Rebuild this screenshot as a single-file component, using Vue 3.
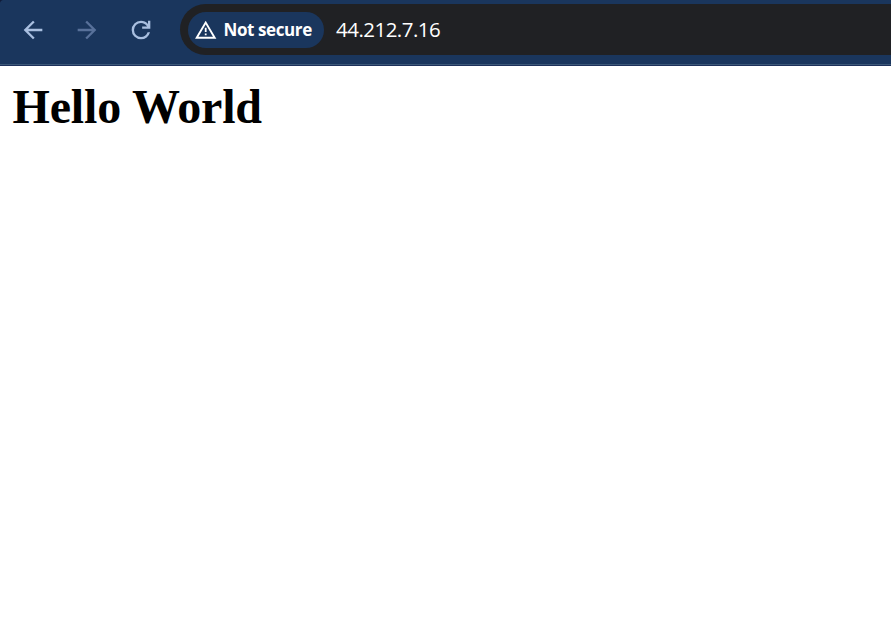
<script setup>
const address = '44.212.7.16'
</script>

<template>
  <div class="window">
    <header class="toolbar">
      <nav class="nav">
        <button class="nav-btn" aria-label="Back">
          <svg viewBox="0 0 24 24"><path d="m7.825 13 5.6 5.6L12 20l-8-8 8-8 1.425 1.4-5.6 5.6H20v2z" /></svg>
        </button>
        <button class="nav-btn muted" aria-label="Forward">
          <svg viewBox="0 0 24 24"><path d="M16.175 13H4v-2h12.175l-5.6-5.6L12 4l8 8-8 8-1.425-1.4z" /></svg>
        </button>
        <button class="nav-btn" aria-label="Reload">
          <svg viewBox="0 0 24 24"><path d="M12 20q-3.35 0-5.675-2.325T4 12t2.325-5.675T12 4q1.725 0 3.3.7125T18 6.75V4h2v7h-7V9h4.2q-.8-1.4-2.1875-2.2T12 6Q9.5 6 7.75 7.75T6 12t1.75 4.25T12 18q1.925 0 3.475-1.1T17.65 14h2.1q-.7 2.65-2.85 4.325T12 20" /></svg>
        </button>
      </nav>
      <div class="omnibox">
        <div class="chip">
          <svg class="warn" viewBox="0 0 22 18">
            <path d="M1.7 16.7L10.7 1.6l9 15.1z" fill="none" stroke="#fff" stroke-width="1.9" />
            <path d="M9.8 6.8h1.8v4.3h-1.8zM9.8 12.5h1.8v1.8h-1.8z" fill="#fff" />
          </svg>
          <span class="label">Not secure</span>
        </div>
        <span class="address">{{ address }}</span>
      </div>
    </header>
    <main class="page">
      <h1>Hello World</h1>
    </main>
  </div>
</template>

<style>
body {
  background: #fff;
}
</style>

<style scoped>
.window {
  height: 628px;
  overflow: hidden;
  background: #fff;
}
.toolbar {
  box-sizing: border-box;
  height: 66px;
  display: flex;
  align-items: flex-start;
  padding: 4px 0 0 19px;
  background:
    linear-gradient(#3c5878, #3c5878) 0 64px / 100% 1px no-repeat,
    linear-gradient(#1d315b, #1d315b) 0 65px / 100% 1px no-repeat,
    radial-gradient(circle at 5px 5px, transparent 5px, #101b38 6px) 0 0 / 3px 5px no-repeat,
    #1a365d;
}
.nav {
  display: flex;
  gap: 27px;
  width: 161px;
  padding-top: 12px;
}
.nav-btn {
  width: 27px;
  height: 27px;
  padding: 0;
  border: 0;
  background: none;
  color: #a9bfe0;
}
.nav-btn.muted {
  color: #58719a;
}
.nav-btn svg {
  display: block;
  width: 28px;
  height: 28px;
  fill: currentColor;
}
.omnibox {
  box-sizing: border-box;
  flex: 1;
  height: 51px;
  display: flex;
  align-items: center;
  padding-left: 7.5px;
  border-radius: 26px 0 0 26px;
  background: #202124;
  color: #fff;
}
.chip {
  box-sizing: border-box;
  width: 136.5px;
  height: 36px;
  display: flex;
  align-items: center;
  gap: 7px;
  padding-left: 7px;
  border-radius: 18px;
  background: #1a365d;
}
.warn {
  flex: none;
  width: 22px;
  height: 18px;
}
.label {
  font: 700 17px/36px "Open Sans", sans-serif;
  letter-spacing: -0.4px;
  white-space: nowrap;
}
.address {
  height: 36px;
  margin-left: 12px;
  font: 400 20.5px/34px "Open Sans", sans-serif;
  letter-spacing: -0.52px;
}
.page {
  padding: 13px 12.5px;
}
h1 {
  margin: 0;
  font: 700 48px/56px "Liberation Serif", serif;
  letter-spacing: -0.16px;
  color: #000;
}
</style>
